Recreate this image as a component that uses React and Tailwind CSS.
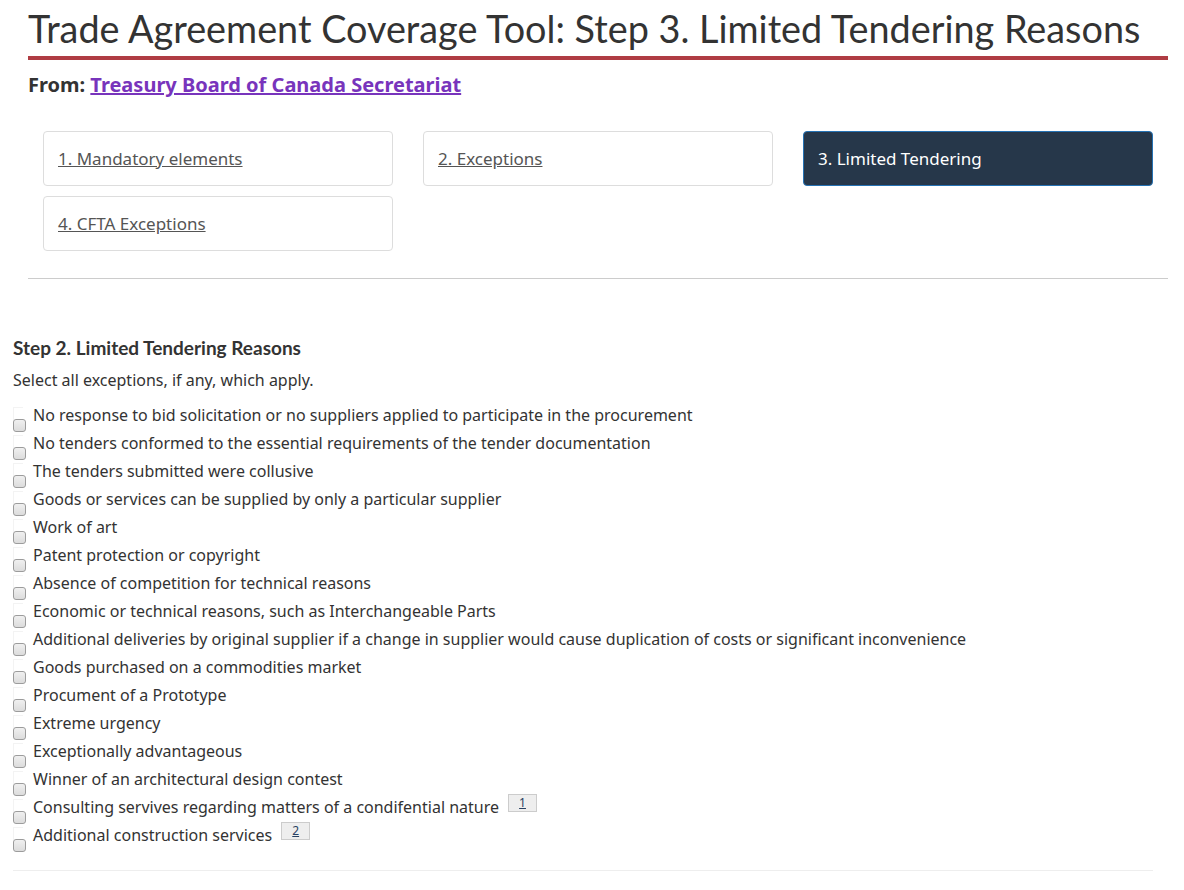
import React from 'react';

const reasons = [
    'No response to bid solicitation or no suppliers applied to participate in the procurement',
    'No tenders conformed to the essential requirements of the tender documentation',
    'The tenders submitted were collusive',
    'Goods or services can be supplied by only a particular supplier',
    'Work of art',
    'Patent protection or copyright',
    'Absence of competition for technical reasons',
    'Economic or technical reasons, such as Interchangeable Parts',
    'Additional deliveries by original supplier if a change in supplier would cause duplication of costs or significant inconvenience',
    'Goods purchased on a commodities market',
    'Procument of a Prototype',
    'Extreme urgency',
    'Exceptionally advantageous',
    'Winner of an architectural design contest',
    { label: 'Consulting servives regarding matters of a condifential nature', note: '1' },
    { label: 'Additional construction services', note: '2' },
];

const steps = [
    { label: '1. Mandatory elements' },
    { label: '2. Exceptions' },
    { label: '3. Limited Tendering', active: true },
    { label: '4. CFTA Exceptions' },
];

const Checkbox = () => (
    <div className="relative w-[13px] h-[28px] shrink-0">
        <span className="absolute left-0 top-[6px] w-[10px] h-[13px] border-t border-l border-[#f3f3f3]"></span>
        <span className="absolute left-0 top-[18px] w-[13px] h-[13px] rounded-[3px] border border-[#9c9c9c] bg-gradient-to-b from-[#f0f0f0] to-[#dcdcdc]"></span>
    </div>
);

const App = () => {
    return (
        <div className="bg-white text-[#333] pl-[13px] pb-[20px]" style={{ fontFamily: '"Noto Sans", sans-serif' }}>
            <div className="ml-[15px] w-[1140px]">
                <h1
                    className="text-[37.8px] leading-[46px] pt-[6px] pb-[4px] border-b-4 border-[#af3c43] text-[#333]"
                    style={{ fontFamily: 'Lato, sans-serif' }}
                >
                    Trade Agreement Coverage Tool: Step 3. Limited Tendering Reasons
                </h1>
                <p className="mt-[12px] text-[20px] leading-[26px] font-bold">
                    From: <a href="#" className="text-[#7834bc] underline">Treasury Board of Canada Secretariat</a>
                </p>

                <div className="mt-[33px] px-[15px] grid grid-cols-3 gap-x-[30px] gap-y-[10px]">
                    {steps.map((s) => (
                        <div
                            key={s.label}
                            className={
                                s.active
                                    ? 'h-[55px] flex items-center pl-[14px] pr-[15px] rounded-[4px] border border-[#2572b4] bg-[#26374a] text-white text-[17px]'
                                    : 'h-[55px] flex items-center pl-[14px] pr-[15px] rounded-[4px] border border-[#ddd] bg-white text-[17px]'
                            }
                        >
                            {s.active ? (
                                <span>{s.label}</span>
                            ) : (
                                <a href="#" className="underline text-[#555]">{s.label}</a>
                            )}
                        </div>
                    ))}
                </div>

                <hr className="mt-[27px] border-t border-[#ccc]" />
            </div>

            <div className="mt-[57px] w-[1140px]">
                <h2 className="text-[19px] leading-[24px] font-bold text-[#333]" style={{ fontFamily: 'Lato, sans-serif' }}>
                    Step 2. Limited Tendering Reasons
                </h2>
                <p className="mt-[8px] text-[16px] leading-[24px]">Select all exceptions, if any, which apply.</p>

                <div className="mt-[9px]">
                    {reasons.map((r) => {
                        const label = typeof r === 'string' ? r : r.label;
                        const note = typeof r === 'string' ? null : r.note;
                        return (
                            <div key={label} className="flex h-[28px]">
                                <Checkbox />
                                <span className="ml-[7px] text-[16px] leading-[28px] text-[#333]">{label}</span>
                                {note && (
                                    <span className="ml-[9px] mt-[1px] h-[18px] w-[29px] flex items-start justify-center bg-[#eee] border border-[#ccc] text-[12px] leading-[15px]">
                                        <a href="#" className="underline text-[#284162]">{note}</a>
                                    </span>
                                )}
                            </div>
                        );
                    })}
                </div>

                <hr className="mt-[21px] border-t border-[#eee]" />
            </div>
        </div>
    );
};

export default App;
